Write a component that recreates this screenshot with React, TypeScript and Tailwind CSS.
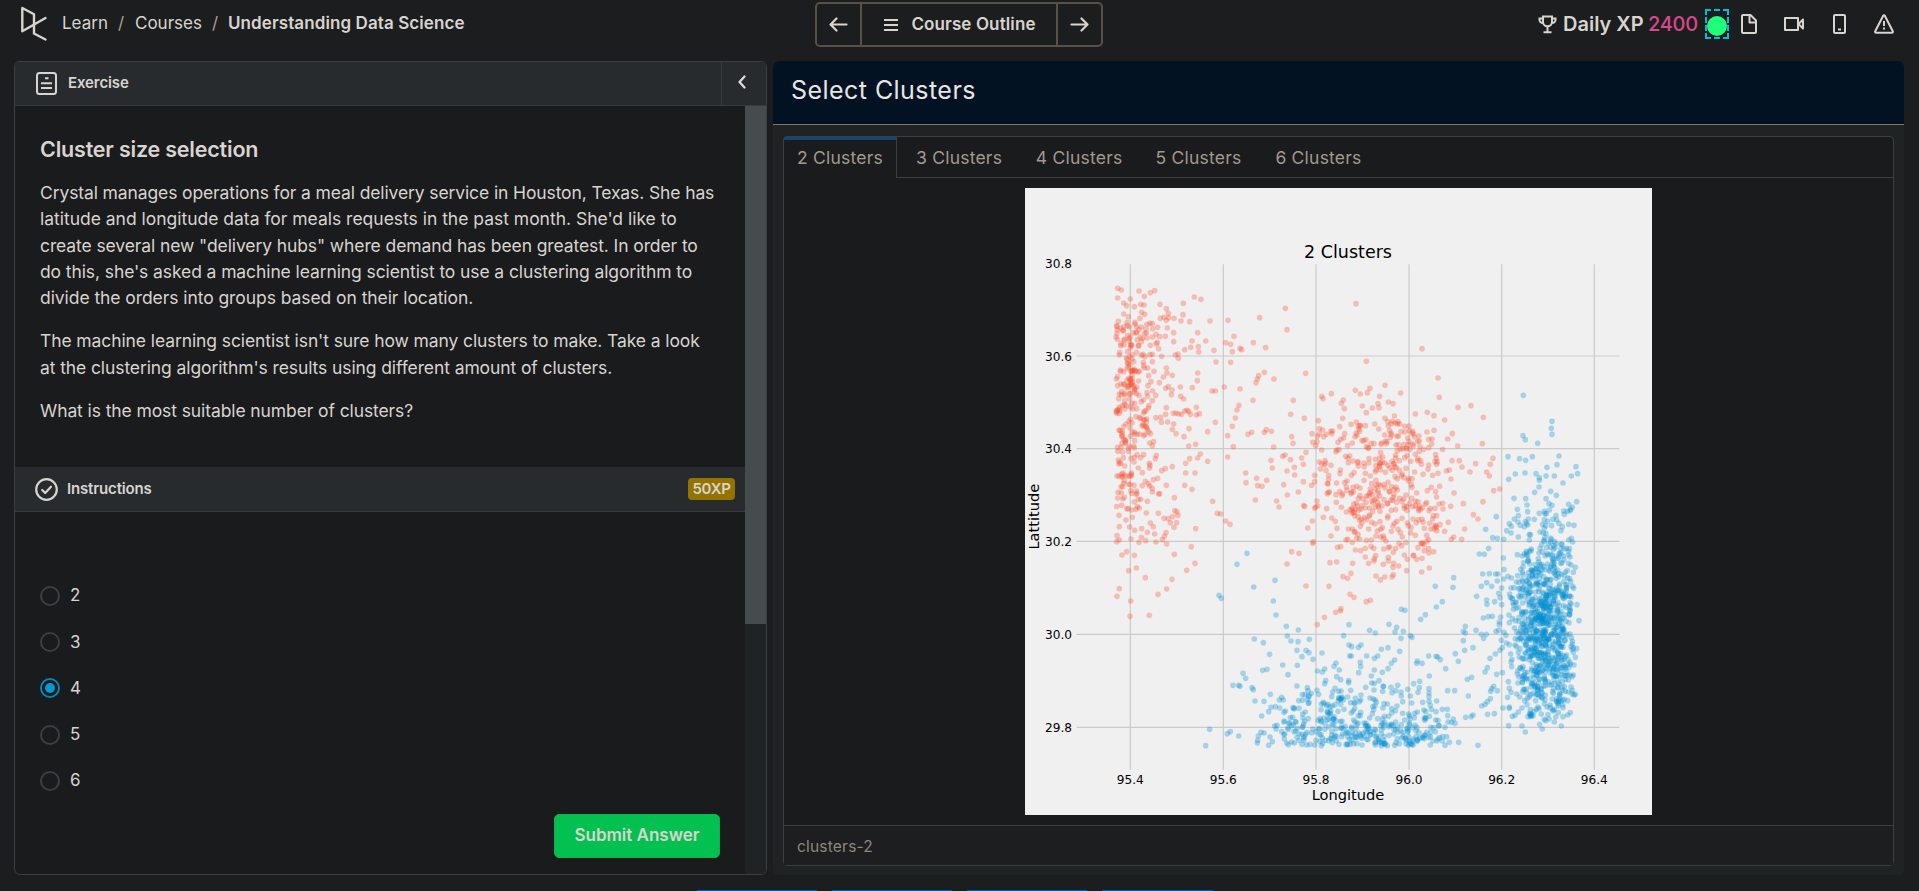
import React from "react";

type Pts = number[];

/* ---------- scatter data, in thirds of a pixel ---------- */

const redWest: Pts = [
  293,325, 304,330, 293,354, 357,333, 373,349, 391,338, 404,332, 331,357, 311,369, 320,377, 343,380, 362,373, 372,375, 420,373, 439,386,
  445,400, 365,397, 374,403, 311,402, 325,410, 295,424, 321,427, 345,427, 360,415, 397,431, 421,415, 432,412, 446,413, 462,415, 439,421,
  490,370, 523,351, 543,358, 489,404, 483,423, 509,425, 570,423, 624,421, 719,413, 796,385, 801,449, 533,458, 461,458, 442,444, 413,442,
  398,447, 378,447, 364,441, 350,441, 329,441, 310,451, 291,461, 292,450, 290,437, 340,458, 323,467, 461,485, 516,483, 557,483, 512,502,
  494,509, 535,500, 536,516, 582,511, 588,546, 642,469, 617,488, 632,493, 637,515, 660,505, 665,509, 700,488, 737,503, 632,547, 533,579,
  532,602, 457,586, 441,579, 430,591, 439,564, 475,535, 466,525, 474,522, 416,506, 408,491, 436,469, 419,470, 397,471, 517,623, 576,633,
  586,633, 613,621, 660,627, 733,577, 716,587, 712,597, 708,608, 762,597, 857,580, 699,661, 657,676, 651,690, 646,714, 637,739, 586,727,
  563,755, 623,767, 640,800, 623,831, 563,844, 529,682, 538,701, 529,705, 511,703, 506,694, 501,691, 494,693, 485,703, 476,702, 468,699,
  460,700, 482,649, 491,657, 454,644, 456,630, 445,620, 437,625, 481,621, 437,703, 422,712, 443,726, 461,732, 457,748, 468,761, 492,770,
  507,746, 506,798, 527,793, 541,822, 533,834, 509,836, 497,850, 497,879, 525,879, 457,860, 436,866, 425,872, 439,916, 413,895, 400,899,
  494,916, 516,928, 463,953, 578,964, 592,1000, 602,1002, 617,1023, 630,1033, 684,763, 695,757, 733,757, 739,749, 754,754, 761,801,
  812,703, 820,661, 853,715, 815,770, 819,790, 858,817, 845,834, 850,853, 811,839, 788,829, 795,825, 753,841, 757,864, 801,873, 823,862,
  824,885, 850,905, 677,879, 678,908, 710,895, 713,917, 726,919, 740,901, 791,914, 835,936, 802,945, 706,960, 770,963, 777,981, 851,976,
  854,980, 884,985, 877,1023, 863,1044, 875,916, 884,886, 891,963, 876,761, 878,787, 891,785, 895,722, 898,746, 905,649, 909,656, 934,641,
  970,660, 964,670, 973,686, 968,715, 959,740, 464,992, 471,995, 474,1006, 458,1010, 445,1016, 432,1015, 415,1000, 451,1028, 470,1028,
  462,1042, 527,1046, 438,1058, 433,1069, 427,1079, 408,1086, 440,1092, 404,1062, 400,1040, 391,1029, 379,999, 382,964, 416,942, 514,1100,
  463,1123, 320,1115, 306,1125, 343,1126, 290,1085, 298,1080, 291,1067, 298,1040, 318,1020, 329,1041, 344,1051, 365,1046, 382,1057,
  377,1082, 364,1072, 357,1087, 333,1077, 297,1006, 320,986, 305,976, 815,1115, 837,1120, 880,1085, 878,1090,
  291,888, 297,888, 307,889, 315,887, 323,889, 330,888, 334,888, 296,852, 299,846, 302,850, 295,840, 388,850, 390,856, 389,864, 382,748,
  380,742, 369,733, 366,738, 378,740, 374,720, 370,718, 289,695, 292,690, 300,693, 315,687, 334,612, 338,606, 330,615, 341,620, 345,628,
  348,988, 352,980, 358,984, 343,966, 349,933, 351,940, 355,958, 308,957, 313,952, 326,913, 311,910, 308,920, 294,937, 333,932, 362,958,
  326,1172, 349,1164, 376,1193, 298,1226, 291,1249, 332,1263, 330,1309, 388,1306, 414,1243, 440,1227, 456,1198, 500,1171, 525,1150,
  801,1152, 858,1218, 927,1219, 930,1148, 950,1146, 892,1334, 913,1312, 947,1297, 961,1293, 963,1286, 969,1190, 983,1195,
];

const redCentre: Pts = [
  18,371, 216,506, 49,544, 264,594, 105,616, 152,639, 60,625, 52,638, 16,631, 31,642, 268,652, 89,649, 84,671, 115,666, 129,671, 87,683,
  67,684, 37,678, 49,698, 232,697, 252,707, 196,702, 133,708, 105,715, 113,725, 115,738, 324,682, 363,677, 400,712, 284,720, 149,732,
  177,738, 74,732, 86,747, 46,737, 31,737, 19,726, 153,755, 188,754, 231,756, 252,751, 307,761, 293,777, 236,778, 207,768, 173,774, 124,765,
  104,765, 18,760, 36,782, 49,800, 72,791, 95,789, 138,795, 158,806, 188,792, 221,808, 278,808, 323,798, 397,791, 429,835, 421,853,
  377,851, 328,842, 306,842, 336,861, 360,876, 410,876, 418,888, 298,870, 289,873, 303,897, 264,880, 260,853, 236,855, 214,853, 204,836,
  137,826, 127,844, 104,849, 89,834, 41,849, 449,927, 431,932, 399,965, 312,939, 257,935, 232,932, 269,919, 340,971, 302,979, 278,970,
  279,987, 370,1004, 384,1017, 344,1047, 295,1027, 270,1034, 284,1054, 311,1071, 304,1078, 335,1078, 250,1007, 219,1027, 223,1045, 230,1066,
  236,1079, 237,1119, 223,1112, 216,1090, 191,1126, 200,1138, 168,1087, 155,1097, 144,1048, 156,1015, 115,1103, 137,1105, 130,1117,
  101,1075, 78,1068, 49,1081, 64,1080, 32,1112, 16,1110,
  78,1188, 91,1200, 104,1191, 126,1191, 170,1172, 146,1158, 100,1153, 115,1143, 72,1143, 56,1150, 3,1180, 8,1150, 12,1252, 49,1265, 61,1261,
  0,1243, 172,1138, 131,1150,
];

const blueSouth: Pts = [
  681,40, 651,73, 701,141, 765,121, 597,166, 604,175, 760,183, 768,225, 799,259, 835,270, 802,288, 813,303, 834,305, 868,298, 703,297,
  730,308, 749,343, 788,375, 804,404, 832,376, 831,331, 858,331, 867,338, 846,350, 879,358, 906,339, 728,391, 741,388, 669,400, 677,415,
  639,436, 656,436, 660,439, 696,443, 700,449, 705,483, 732,484, 751,463, 785,472, 790,480, 778,480, 725,528, 746,515, 753,502, 766,500,
  779,504, 792,517, 823,504, 818,532, 831,438, 862,443, 855,464, 847,464, 864,452, 874,460, 848,481, 863,478, 867,488, 891,451, 917,422,
  892,393, 907,396, 914,387, 942,379, 948,369, 958,390, 950,410, 962,419, 986,422, 971,287, 987,254, 987,315, 989,348, 557,617, 569,568,
  622,581, 631,575, 656,588, 712,609, 713,601, 715,588, 723,577, 732,579, 746,616, 750,591, 757,605, 764,558, 771,556, 768,567, 785,575,
  793,597, 800,609, 815,606, 808,550, 805,568, 822,575, 831,592, 837,505, 848,522, 856,516, 851,552, 848,560, 852,590, 851,601, 870,613,
  884,615, 904,617, 938,456, 956,454, 983,471, 966,471,
];

const blueEast: Pts = [
  520,-434, 606,-356, 604,-335, 606,-317, 519,-313, 526,-301, 563,-290, 474,-250, 509,-244, 527,-239, 547,-250, 627,-252, 621,-226, 591,-218,
  558,-199, 525,-201, 496,-198, 476,-182, 568,-187, 568,-179, 588,-192, 613,-192, 664,-192, 678,-220, 683,-199, 639,-171, 567,-159, 554,-143,
  602,-146, 619,-134, 588,-124, 597,-109, 606,-104, 492,-125, 527,-124, 531,-105, 502,-92, 505,-73, 493,-63, 439,-70, 407,-32, 428,-7, 442,-5,
  461,-2, 470,-28, 478,-49, 484,-41, 680,-115, 656,-107, 667,-98, 662,-92, 652,-86, 641,-87, 643,-77, 618,-73, 585,-79, 535,-63, 553,-62,
  672,-44, 637,-40, 664,-5, 658,26, 676,82, 671,145, 662,125, 681,194, 687,242, 680,326, 676,352, 672,375, 666,410, 663,441, 672,465, 676,463,
  653,482, 661,518, 653,525, 639,530, 625,518, 634,558, 613,546, 597,537, 569,553, 577,567, 526,576, 516,558, 476,557, 495,526, 487,529,
  459,504, 433,521, 413,523, 369,525, 363,530, 347,532, 395,498, 405,493, 412,485, 421,476, 442,452, 431,439, 422,454, 425,446, 440,403,
  405,396, 412,383, 420,355, 436,342, 457,323, 450,331, 369,323, 378,271, 401,295, 409,283, 394,283, 446,271, 438,274, 448,254, 400,234,
  415,230, 427,229, 380,169, 410,180, 411,193, 434,185, 450,173, 446,160, 455,144, 394,139, 410,128, 425,139, 442,123, 398,102, 418,101,
  437,102, 444,102, 388,42, 403,43, 416,25, 311,113, 309,142, 256,139, 277,185, 259,201, 212,238, 226,224, 154,208, 165,211, 117,253,
  59,271, 76,279, 140,262, 135,276, 160,274, 153,295, 181,287, 186,292, 346,259, 340,274, 346,279, 340,302, 344,331, 316,341, 325,364,
  94,328, 114,323, 149,334, 134,360, 124,370, 114,386, 97,397, 83,348, 73,355, 50,348, 31,367, 32,380, 33,315, 25,322, 5,320, 4,348,
  202,363, 200,370, 216,370, 236,348, 258,349, 263,351, 271,359, 287,386, 238,408, 209,424, 191,431, 208,443, 204,457, 237,446, 237,459,
  237,470, 241,496, 218,487, 173,448, 143,436, 123,442, 100,439, 137,452, 98,454, 87,422, 73,430, 65,429, 47,442, 73,390, 64,408,
  293,452, 314,452, 355,468, 352,418, 365,412, 277,508, 292,508, 293,527, 257,540, 264,542, 238,529, 223,534, 285,562, 305,547, 310,537,
  315,550, 256,575, 249,603, 290,590, 298,607, 285,616, 326,607, 384,616, 158,485, 141,498, 112,492, 194,520, 178,528, 164,540, 201,563,
  198,572, 209,595, 222,596, 186,613, 168,611, 148,611, 33,465, 75,480, 99,504, 70,477, 28,485, 15,490,
];

/* ---------- filling for the dense parts of each cluster ---------- */

function makeRandom(seed: number) {
  let s = seed;
  return () => {
    s = (s * 1664525 + 1013904223) % 4294967296;
    return s / 4294967296;
  };
}

function fill(seed: number, count: number, draw: (r: () => number, n: () => number) => [number, number] | null): Pts {
  const r = makeRandom(seed);
  const n = () => Math.sqrt(-2 * Math.log(r() + 1e-9)) * Math.cos(2 * Math.PI * r());
  const out: Pts = [];
  while (out.length < count * 2) {
    const p = draw(r, n);
    if (p) out.push(Math.round(p[0]), Math.round(p[1]));
  }
  return out;
}

const westFill = fill(11, 225, (r, n) => {
  const x = 274 + Math.abs(n()) * 76;
  const y = 610 + n() * 190;
  return x > 430 || y < 405 || y > 1020 ? null : [x, y];
});

const centreFill = fill(23, 350, (r, n) => {
  const x = 1040 + n() * 142;
  const y = 888 + n() * 142;
  return x < 868 || x > 1245 || y < 700 || y > 1165 || y > 940 + (x - 850) * 1.6 ? null : [x, y];
});

const southFill = fill(37, 300, (r, n) => {
  const x = 1000 + n() * 135;
  const y = 1673 - Math.abs(n()) * 78;
  return x < 775 || x > 1270 || y < 1400 ? null : [x, y];
});

const eastFill = fill(53, 900, (r, n) => {
  const x = 1562 + n() * 57;
  const y = 1315 + n() * 175;
  const inset = y > 1530 ? (y - 1530) * 0.9 : 0;
  return x < 1422 + inset || x > 1646 - inset || y < 965 || y > 1600 ? null : [x, y];
});

function Dots({ pts, dx, dy, color }: { pts: Pts; dx: number; dy: number; color: string }) {
  const dots: React.ReactNode[] = [];
  for (let i = 0; i < pts.length; i += 2) {
    dots.push(<circle key={i} cx={pts[i]} cy={pts[i + 1]} r={8.4} />);
  }
  return (
    <g transform={`translate(${dx} ${dy})`} fill={color} fillOpacity={0.32}>
      {dots}
    </g>
  );
}

const xTicks: [number, string][] = [[316, "95.4"], [595, "95.6"], [873, "95.8"], [1152, "96.0"], [1430, "96.2"], [1708, "96.4"]];
const yTicks: [number, string][] = [[226, "30.8"], [504, "30.6"], [782, "30.4"], [1060, "30.2"], [1339, "30.0"], [1618, "29.8"]];

function ScatterPlot() {
  return (
    <svg className="block h-[627px] w-[627px] bg-[#f0f0f0]" viewBox="0 0 1881 1881" fontFamily="'DejaVu Sans', sans-serif" fill="#000">
      <g stroke="#cbcbcb" strokeWidth={3.6}>
        {xTicks.map(([x]) => (
          <line key={x} x1={x} x2={x} y1={229} y2={1745} />
        ))}
        {yTicks.slice(1).map(([y]) => (
          <line key={y} x1={155} x2={1783} y1={y} y2={y} />
        ))}
      </g>
      <Dots pts={redWest} dx={-15} dy={-24} color="#fc4f30" />
      <Dots pts={redCentre} dx={975} dy={-24} color="#fc4f30" />
      <Dots pts={westFill} dx={-1} dy={0} color="#fc4f30" />
      <Dots pts={centreFill} dx={0} dy={0} color="#fc4f30" />
      <Dots pts={blueSouth} dx={-15} dy={1056} color="#008fd5" />
      <Dots pts={blueEast} dx={975} dy={1056} color="#008fd5" />
      <Dots pts={southFill} dx={0} dy={0} color="#008fd5" />
      <Dots pts={eastFill} dx={0} dy={0} color="#008fd5" />
      <g fontSize={36.5} textAnchor="middle">
        {xTicks.map(([x, t]) => (
          <text key={t} x={x} y={1787}>{t}</text>
        ))}
      </g>
      <g fontSize={36.5} textAnchor="end">
        {yTicks.map(([y, t]) => (
          <text key={t} x={141} y={y + 14}>{t}</text>
        ))}
      </g>
      <text x={969} y={210} fontSize={52.5} textAnchor="middle">2 Clusters</text>
      <text x={969} y={1837} fontSize={43.8} textAnchor="middle">Longitude</text>
      <text transform="translate(41 986) rotate(-90)" fontSize={43.8} textAnchor="middle">Lattitude</text>
    </svg>
  );
}

/* ---------- icons ---------- */

function Logo() {
  return (
    <svg className="h-[36px] w-[28px] shrink-0" viewBox="0 0 28 36" fill="none" stroke="#d8d4cf" strokeWidth={2.4} strokeLinejoin="round" strokeLinecap="round">
      <path d="M14 27.5V8.2L2.3 2v23.2L25.5 12M14 27.5l11.5 6" />
    </svg>
  );
}

function TrophyIcon() {
  return (
    <svg className="h-[19px] w-[19px]" viewBox="0 0 19 19" fill="none" stroke="#d8d4cf" strokeWidth={2}>
      <path d="M5 1.5h9v5.3a4.5 4.5 0 0 1-9 0zM9.5 11.5v5M5.5 17.2h8M5 3.5H1.5v1.2A3.4 3.4 0 0 0 5.2 8M14 3.5h3.500v1.200A3.400 3.400 0 0 1 13.800 8" />
    </svg>
  );
}

function FileIcon() {
  return (
    <svg className="h-[20px] w-[16px]" viewBox="0 0 16 20" fill="none" stroke="#d8d4cf" strokeWidth={2} strokeLinejoin="round">
      <path d="M9.500 1H2a1 1 0 0 0-1 1v16a1 1 0 0 0 1 1h12a1 1 0 0 0 1-1V6.500zM8.500 1v7.500H15" />
    </svg>
  );
}

function VideoIcon() {
  return (
    <svg className="h-[14px] w-[20px]" viewBox="0 0 20 14" fill="none" stroke="#d8d4cf" strokeWidth={2} strokeLinejoin="round">
      <path d="M1 1h13v12H1zM14.500 7l4.500-4.500v9z" />
    </svg>
  );
}

function PhoneIcon() {
  return (
    <svg className="h-[20px] w-[13px]" viewBox="0 0 13 20" fill="none" stroke="#d8d4cf" strokeWidth={2}>
      <rect x="1" y="1" width="11" height="18" rx="1" />
      <path d="M5 15.500h3" />
    </svg>
  );
}

function AlertIcon() {
  return (
    <svg className="h-[20px] w-[20px]" viewBox="0 0 20 20" fill="none" stroke="#d8d4cf" strokeWidth={2} strokeLinejoin="round">
      <path d="M9.200 1.800 1.200 17.300a1 1 0 0 0 .9 1.500h15.800a1 1 0 0 0 .9-1.500L10.800 1.800a.9.9 0 0 0-1.600 0zM10 7v5M10 13.500v2" />
    </svg>
  );
}

function ExerciseIcon() {
  return (
    <svg className="h-[23px] w-[21px]" viewBox="0 0 21 23" fill="none" stroke="#d8d4cf" strokeWidth={2}>
      <rect x="1" y="1" width="19" height="21" rx="2.500" />
      <path d="M5 11.200h11M5 16h11M9 6.200h3.500" />
    </svg>
  );
}

function CheckIcon() {
  return (
    <svg className="h-[23px] w-[23px]" viewBox="0 0 23 23" fill="none" stroke="#d8d4cf" strokeWidth={2.200} strokeLinecap="round" strokeLinejoin="round">
      <circle cx="11.500" cy="11.500" r="10.300" />
      <path d="m7.200 12 3 3 5.800-6.300" />
    </svg>
  );
}

function Arrow({ flip }: { flip?: boolean }) {
  return (
    <svg className={flip ? "h-[15px] w-[19px] rotate-180" : "h-[15px] w-[19px]"} viewBox="0 0 19 15" fill="none" stroke="#d8d4cf" strokeWidth={2.200} strokeLinecap="round" strokeLinejoin="round">
      <path d="M7.500 1.500 1.500 7.500l6 6M2 7.500h15.500" />
    </svg>
  );
}

/* ---------- page parts ---------- */

function TopBar() {
  return (
    <header className="flex h-[61px] shrink-0 items-start whitespace-nowrap text-[#d8d4cf]">
      <div className="flex w-[815px] items-start pl-[20px] pt-[6px]">
        <Logo />
        <nav className="flex pl-[14px] pt-[5px] text-[17px] leading-[24px]">
          <span className="w-[56px]">Learn</span>
          <span className="w-[17px] text-[#a8a095]">/</span>
          <span className="w-[77px]">Courses</span>
          <span className="w-[16px] text-[#a8a095]">/</span>
          <span className="font-semibold tracking-[0.09px]">Understanding Data Science</span>
        </nav>
      </div>
      <div className="mt-[2px] flex h-[45px] w-[288px] rounded-[5px] border-2 border-[#575147]">
        <button className="flex w-[45px] items-center justify-center border-r-2 border-[#575147] pb-[1px]"><Arrow /></button>
        <button className="flex flex-1 items-center justify-center gap-[13px] border-r-2 border-[#575147] pl-[2px] text-[17px] font-semibold tracking-[0.12px]">
          <svg className="h-[12px] w-[14px]" viewBox="0 0 14 12" stroke="#d8d4cf" strokeWidth={2}>
            <path d="M0 1h14M0 6h14M0 11h14" />
          </svg>
          <span className="pt-[1px]">Course Outline</span>
        </button>
        <button className="flex w-[43px] items-center justify-center pb-[1px]"><Arrow flip /></button>
      </div>
      <div className="flex h-[48px] flex-1 items-center justify-end pr-[25px]">
        <TrophyIcon />
        <span className="ml-[6px] w-[85px] text-[20px] font-semibold">Daily XP</span>
        <span className="w-[57px] text-[20px] font-medium tracking-[-0.3px] text-[#d9488a]">2400</span>
        <span className="flex h-[30px] w-[24px] items-center justify-center border-2 border-dashed border-[#00bcd8]">
          <span className="mt-[4px] h-[20px] w-[20px] shrink-0 rounded-full bg-[#1fff7a]" />
        </span>
        <span className="ml-[12px]"><FileIcon /></span>
        <span className="ml-[27px]"><VideoIcon /></span>
        <span className="ml-[29px]"><PhoneIcon /></span>
        <span className="ml-[28px]"><AlertIcon /></span>
      </div>
    </header>
  );
}

function Choice({ label, selected }: { label: string; selected?: boolean }) {
  return (
    <label className="flex h-[46.2px] items-center gap-[10px] text-[17px]">
      <span className={selected ? "flex h-[20px] w-[20px] items-center justify-center rounded-full border-2 border-[#0686b5]" : "h-[20px] w-[20px] rounded-full border-2 border-[#3a3f41]"}>
        {selected && <span className="h-[10px] w-[10px] rounded-full bg-[#0798cf]" />}
      </span>
      {label}
    </label>
  );
}

function ExercisePanel() {
  return (
    <section className="flex h-[814px] w-[753px] flex-col overflow-hidden rounded-[6px] border border-[#3a3f41] bg-[#1a1b1c] text-[#d8d4cf]">
      <div className="flex h-[44px] shrink-0 items-center border-b border-[#363a3c] bg-[#272b2d] pl-[21px]">
        <ExerciseIcon />
        <span className="ml-[11px] flex-1 pb-[1px] text-[15px] font-semibold tracking-[-0.1px]">Exercise</span>
        <span className="flex h-full w-[45px] items-center justify-center border-l border-[#363a3c]">
          <svg className="mb-[3px] mr-[4px] h-[14px] w-[8px]" viewBox="0 0 8 14" fill="none" stroke="#e0dcd6" strokeWidth={2.200} strokeLinecap="round" strokeLinejoin="round">
            <path d="M6.500 1.500 1.500 7l5 5.500" />
          </svg>
        </span>
      </div>
      <div className="flex min-h-0 flex-1">
        <div className="flex w-[730px] flex-col">
          <div className="h-[361px] whitespace-nowrap pl-[25px] pt-[28px] text-[17.5px] leading-[26.25px] tracking-[-0.1px]">
            <h1 className="text-[21.5px] font-semibold leading-[30px] tracking-[-0.2px]">Cluster size selection</h1>
            <p className="mt-[16px]">
              <span className="tracking-[-0.117px]">Crystal manages operations for a meal delivery service in Houston, Texas. She has</span><br />
              <span className="tracking-[-0.015px]">latitude and longitude data for meals requests in the past month. She'd like to</span><br />
              create several new "delivery hubs" where demand has been greatest. In order to<br />
              do this, she's asked a machine learning scientist to use a clustering algorithm to<br />
              <span className="tracking-[-0.07px]">divide the orders into groups based on their location.</span>
            </p>
            <p className="mt-[17px]">
              The machine learning scientist isn't sure how many clusters to make. Take a look<br />
              at the clustering algorithm's results using different amount of clusters.
            </p>
            <p className="mt-[17px]">What is the most suitable number of clusters?</p>
          </div>
          <div className="flex h-[45px] shrink-0 items-center border-b border-[#363a3c] bg-[#272b2d] pl-[20px] pr-[10px]">
            <CheckIcon />
            <span className="ml-[9px] flex-1 text-[15px] font-semibold tracking-[-0.15px]">Instructions</span>
            <span className="flex h-[22px] w-[47px] items-center justify-center rounded-[4px] bg-[#957300] text-[15px] font-semibold tracking-[-0.3px]">50XP</span>
          </div>
          <div className="pl-[25px] pt-[61px]">
            <Choice label="2" />
            <Choice label="3" />
            <Choice label="4" selected />
            <Choice label="5" />
            <Choice label="6" />
          </div>
          <div className="flex justify-end pr-[25px] pt-[10px]">
            <button className="h-[44px] w-[166px] rounded-[5px] border border-[#06b548] bg-[#03c150] text-[17px] font-semibold">Submit Answer</button>
          </div>
        </div>
        <div className="w-[21px] bg-[#1f2324]">
          <div className="h-[518px] bg-[#464b4d]" />
        </div>
      </div>
    </section>
  );
}

const otherTabs = ["3 Clusters", "4 Clusters", "5 Clusters", "6 Clusters"];

function ClustersPanel() {
  return (
    <section className="ml-[6px] flex h-[814px] w-[1131px] flex-col overflow-hidden rounded-[6px] bg-[#1f2324]">
      <h2 className="flex h-[64px] shrink-0 items-center border-b border-[#80786a] bg-[#031223] pb-[3px] pl-[18px] text-[25px] tracking-[0.45px] text-[#e8e6e3]">Select Clusters</h2>
      <div className="ml-[10px] mt-[11px] flex h-[730px] w-[1111px] flex-col rounded-[4px] border border-[#3a3f41] bg-[#1a1b1c]">
        <div className="flex h-[41px] shrink-0 text-[17.5px] tracking-[0.22px] text-[#a39a8c]">
          <div className="flex w-[113px] items-center border-r border-t-[3px] border-[#3a3f41] border-t-[#144578] pb-[2px] pl-[13px]">2 Clusters</div>
          <div className="flex flex-1 items-center border-b border-[#3a3f41] pl-[19px] pt-[2px]">
            {otherTabs.map((t) => (
              <span key={t} className="w-[119.8px]">{t}</span>
            ))}
          </div>
        </div>
        <div className="flex h-[647px] shrink-0 pl-[241px] pt-[10px]">
          <ScatterPlot />
        </div>
        <div className="flex flex-1 items-center border-t border-[#3a3f41] bg-[#1c1e1f] pl-[13px] pt-[2px] text-[15.5px] tracking-[0.2px] text-[#8f877a]">clusters-2</div>
      </div>
    </section>
  );
}

export default function App() {
  return (
    <div className="flex h-[891px] w-[1919px] flex-col overflow-hidden bg-[#1c1d1f] font-['Inter',sans-serif]">
      <TopBar />
      <main className="flex h-[829px] shrink-0 pl-[14px]">
        <ExercisePanel />
        <ClustersPanel />
      </main>
      <div className="flex h-px shrink-0 gap-[15px] pl-[697px]">
        <div className="w-[120px] bg-[#0259a8]" />
        <div className="w-[120px] bg-[#0259a8]" />
        <div className="w-[120px] bg-[#0259a8]" />
        <div className="w-[111px] bg-[#0259a8]" />
      </div>
    </div>
  );
}
